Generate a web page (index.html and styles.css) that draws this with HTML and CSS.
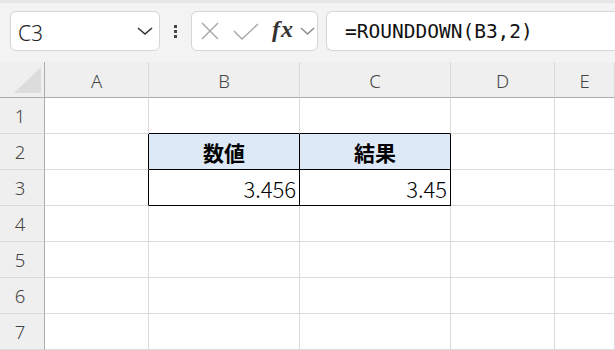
FILE: index.html
```html
<!DOCTYPE html>
<html lang="ja">
<head>
    <meta charset="UTF-8">
    <title>ROUNDDOWN</title>
    <link rel="stylesheet" href="styles.css">
</head>
<body>
    <div class="toolbar">
        <div class="name-box">
            <span>C3</span>
            <svg width="16" height="10" viewBox="0 0 16 10"><polyline points="1,2 8,8 15,2" fill="none" stroke="#333" stroke-width="1.6"/></svg>
        </div>
        <div class="dots"><i></i><i></i><i></i></div>
        <div class="fx-box">
            <svg width="20" height="20" viewBox="0 0 20 20"><path d="M2 2 L18 18 M18 2 L2 18" stroke="#a6a6a6" stroke-width="1.4"/></svg>
            <svg width="26" height="20" viewBox="0 0 26 20"><polyline points="1,10 9,18 25,3" fill="none" stroke="#a6a6a6" stroke-width="1.4"/></svg>
            <span class="fx">fx</span>
            <svg width="15" height="9" viewBox="0 0 15 9"><polyline points="1,1 7.5,7 14,1" fill="none" stroke="#8a8a8a" stroke-width="1.4"/></svg>
        </div>
        <div class="formula">=ROUNDDOWN(B3,2)</div>
    </div>

    <div class="sheet">
        <div class="hd corner"><div class="tri"></div></div>
        <div class="hd col">A</div>
        <div class="hd col">B</div>
        <div class="hd col">C</div>
        <div class="hd col">D</div>
        <div class="hd col">E</div>

        <div class="hd row">1</div>
        <div class="cell"></div>
        <div class="cell top"></div>
        <div class="cell top"></div>
        <div class="cell"></div>
        <div class="cell"></div>

        <div class="hd row">2</div>
        <div class="cell left"></div>
        <div class="cell box head">数値</div>
        <div class="cell box head">結果</div>
        <div class="cell"></div>
        <div class="cell"></div>

        <div class="hd row">3</div>
        <div class="cell left"></div>
        <div class="cell box num">3.456</div>
        <div class="cell box num">3.45</div>
        <div class="cell"></div>
        <div class="cell"></div>

        <div class="hd row">4</div>
        <div class="cell"></div>
        <div class="cell"></div>
        <div class="cell"></div>
        <div class="cell"></div>
        <div class="cell"></div>

        <div class="hd row">5</div>
        <div class="cell"></div>
        <div class="cell"></div>
        <div class="cell"></div>
        <div class="cell"></div>
        <div class="cell"></div>

        <div class="hd row">6</div>
        <div class="cell"></div>
        <div class="cell"></div>
        <div class="cell"></div>
        <div class="cell"></div>
        <div class="cell"></div>

        <div class="hd row">7</div>
        <div class="cell"></div>
        <div class="cell"></div>
        <div class="cell"></div>
        <div class="cell"></div>
        <div class="cell"></div>
    </div>
</body>
</html>
```

FILE: styles.css
```css
* {
    margin: 0;
    padding: 0;
    box-sizing: border-box;
}

body {
    font-family: 'Noto Sans', 'Noto Sans CJK JP', sans-serif;
    background: #fff;
    width: 615px;
    height: 350px;
    overflow: hidden;
}

.toolbar {
    height: 62px;
    background: #f3f3f3;
    border-top: 3px solid #e6e6e6;
    padding: 8px 0 0 10px;
    display: flex;
    align-items: flex-start;
}

.name-box,
.fx-box,
.formula {
    height: 40px;
    background: #fff;
    border: 1px solid #d6d6d6;
    border-radius: 6px;
    display: flex;
    align-items: center;
}

.name-box {
    width: 150px;
    padding: 0 6px 0 7px;
    justify-content: space-between;
    font-size: 21px;
    font-weight: 300;
    color: #222;
}

.name-box span {
    margin-top: 3px;
}

.dots {
    width: 31px;
    height: 40px;
    display: flex;
    flex-direction: column;
    align-items: center;
    justify-content: center;
    gap: 2px;
}

.dots i {
    width: 3px;
    height: 3px;
    background: #444;
}

.fx-box {
    width: 127px;
    padding: 0 0 0 8px;
}

.fx-box svg:nth-child(2) {
    margin-left: 13px;
}

.fx {
    font-family: 'Liberation Serif', serif;
    font-style: italic;
    font-weight: bold;
    font-size: 24px;
    color: #333;
    margin-left: 13px;
    margin-top: -4px;
    letter-spacing: 1px;
}

.fx-box svg:last-child {
    margin-left: 6px;
}

.formula {
    flex: 1;
    margin-left: 8px;
    margin-right: -10px;
    border-right: none;
    border-radius: 6px 0 0 6px;
    padding-left: 18px;
    font-family: 'DejaVu Sans Mono', 'Liberation Mono', monospace;
    font-size: 19.5px;
    color: #111;
}

.sheet {
    display: grid;
    grid-template-columns: 45px 104px 151px 151px 104px 1fr;
    grid-template-rows: 36px repeat(7, 36px);
}

.hd {
    background: #efefef;
    color: #444;
    font-size: 18.5px;
    font-weight: 300;
    display: flex;
    align-items: center;
    justify-content: center;
}

.col {
    border-right: 1px solid #dadada;
    border-bottom: 1px solid #acacac;
    padding-top: 1px;
}

.row {
    border-right: 1px solid #acacac;
    border-bottom: 1px solid #dadada;
    padding-right: 4px;
}

.corner {
    border-right: 1px solid #acacac;
    border-bottom: 1px solid #acacac;
    align-items: flex-end;
    justify-content: flex-end;
    padding: 0 3px 4px 0;
}

.tri {
    width: 27px;
    height: 26px;
    background: #dcdcdc;
    clip-path: polygon(100% 0, 100% 100%, 0 100%);
}

.cell {
    border-right: 1px solid #dadada;
    border-bottom: 1px solid #dadada;
    font-family: 'Noto Sans CJK JP', sans-serif;
    font-size: 21px;
    color: #000;
    display: flex;
    align-items: center;
}

.cell.top {
    border-bottom-color: #000;
}

.cell.left {
    border-right-color: #000;
}

.cell.box {
    border-right-color: #000;
    border-bottom-color: #000;
}

.head {
    background: #dde9f6;
    font-weight: bold;
    justify-content: center;
}

.num {
    justify-content: flex-end;
    padding-right: 3px;
    font-weight: 300;
    font-size: 22px;
}
```
